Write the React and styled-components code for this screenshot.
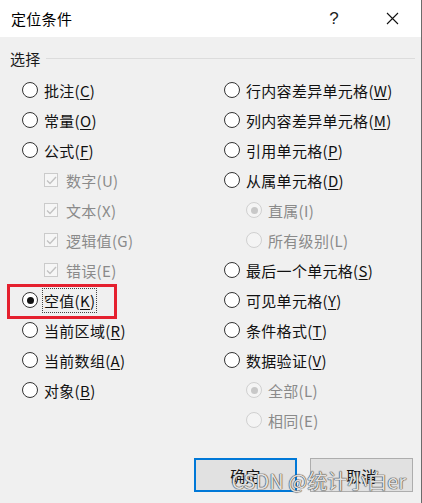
import React from 'react'
import styled, { createGlobalStyle, css } from 'styled-components'

const GlobalStyle = createGlobalStyle`
  html, body {
    margin: 0;
    padding: 0;
    background: #f0f0f0;
  }
  body {
    font-family: "Noto Sans CJK SC", "Noto Sans", sans-serif;
  }
`

const Window = styled.div`
  width: 422px;
  height: 503px;
  display: flex;
  flex-direction: column;
  box-sizing: border-box;
  border-right: 1px solid #6b6b6b;
  background: #f0f0f0;
  position: relative;
  overflow: hidden;
`

const TitleBar = styled.div`
  height: 37px;
  flex: none;
  background: #fff;
  display: flex;
  align-items: center;
  padding-left: 11px;
`

const Title = styled.div`
  flex: 1;
  font-size: 15px;
  color: #000;
  letter-spacing: 0.3px;
`

const TitleButton = styled.div`
  width: 58px;
  height: 37px;
  display: flex;
  align-items: center;
  justify-content: center;
  font-size: 17px;
  color: #222;
  font-family: "Liberation Sans", sans-serif;
`

const Body = styled.div`
  flex: 1;
  display: flex;
  flex-direction: column;
  padding: 10px 8px 0 10px;
`

const GroupHead = styled.div`
  display: flex;
  align-items: center;
  gap: 5px;
  height: 22px;
  font-size: 15px;
  letter-spacing: 0.3px;
  color: #1a1a1a;
  &::after {
    content: '';
    flex: 1;
    height: 1px;
    background: #dcdcdc;
    margin-right: -2px;
  }
`

const Columns = styled.div`
  display: grid;
  grid-template-columns: 202px 1fr;
  padding-left: 12px;
  margin-top: 6px;
`

const Column = styled.div`
  display: flex;
  flex-direction: column;
`

const Row = styled.div`
  position: relative;
  height: 30px;
  display: flex;
  align-items: center;
  padding-left: ${p => (p.$sub ? 22 : 0)}px;
  font-size: 15px;
  letter-spacing: 0.3px;
  color: ${p => (p.$disabled ? '#8a8a8a' : '#111')};
  white-space: nowrap;
`

const RadioDot = styled.span`
  position: relative;
  width: 16px;
  height: 16px;
  box-sizing: border-box;
  border-radius: 50%;
  flex: none;
  margin-right: 6px;
  background: ${p => (p.$disabled ? '#f4f4f4' : '#fff')};
  border: 1.5px solid ${p => (p.$disabled ? '#d0d0d0' : '#333')};
  ${p =>
    p.$checked &&
    css`
      &::after {
        content: '';
        position: absolute;
        left: 50%;
        top: 50%;
        width: 7px;
        height: 7px;
        margin: -3.5px 0 0 -3.5px;
        border-radius: 50%;
        background: ${p.$disabled ? '#c8c8c8' : '#111'};
      }
    `}
`

const CheckBox = styled.span`
  width: 14px;
  height: 14px;
  box-sizing: border-box;
  flex: none;
  margin-right: 8px;
  border: 1px solid #cbcbcb;
  background: #f6f6f6;
  display: flex;
  align-items: center;
  justify-content: center;
`

const Label = styled.span`
  display: inline-block;
  padding: 1px 1px;
  border: 1px ${p => (p.$focus ? 'dotted #444' : 'solid transparent')};
  margin-left: -2px;
`

const Key = styled.span`
  text-decoration: ${p => (p.$disabled ? 'none' : 'underline')};
  text-underline-offset: 2px;
  text-decoration-thickness: 1px;
`

const Highlight = styled.div`
  position: absolute;
  left: -15px;
  top: -1px;
  width: 110px;
  height: 35px;
  box-sizing: border-box;
  border: 3px solid #e5202e;
  pointer-events: none;
`

const Footer = styled.div`
  display: flex;
  justify-content: flex-end;
  gap: 13px;
  margin-top: 23px;
`

const Button = styled.div`
  width: 103px;
  height: 34px;
  box-sizing: border-box;
  display: flex;
  align-items: center;
  justify-content: center;
  background: #e1e1e1;
  font-size: 15px;
  letter-spacing: 0.3px;
  color: #111;
  border: ${p => (p.$primary ? '2px solid #0078d7' : '1px solid #adadad')};
`

const Watermark = styled.div`
  position: absolute;
  right: 15px;
  bottom: 8px;
  font-size: 20px;
  color: rgba(255, 255, 255, 0.85);
  text-shadow: 0 0 1px #444, 0 0 1px #444, 0 0 1px #444;
  font-family: "Noto Sans CJK SC", "Noto Sans", sans-serif;
  pointer-events: none;
`

const Check = () => (
  <svg width="11" height="9" viewBox="0 0 11 9">
    <path d="M1 4.5 L4 7.5 L10 1" fill="none" stroke="#c2c2c2" strokeWidth="1.4" />
  </svg>
)

const Close = () => (
  <svg width="13" height="13" viewBox="0 0 13 13">
    <path d="M1 1 L12 12 M12 1 L1 12" stroke="#111" strokeWidth="1.1" />
  </svg>
)

const left = [
  { type: 'radio', text: '批注', key: 'C' },
  { type: 'radio', text: '常量', key: 'O' },
  { type: 'radio', text: '公式', key: 'F' },
  { type: 'check', text: '数字', key: 'U', sub: true, disabled: true },
  { type: 'check', text: '文本', key: 'X', sub: true, disabled: true },
  { type: 'check', text: '逻辑值', key: 'G', sub: true, disabled: true },
  { type: 'check', text: '错误', key: 'E', sub: true, disabled: true },
  { type: 'radio', text: '空值', key: 'K', checked: true, focus: true, mark: true },
  { type: 'radio', text: '当前区域', key: 'R' },
  { type: 'radio', text: '当前数组', key: 'A' },
  { type: 'radio', text: '对象', key: 'B' },
]

const right = [
  { type: 'radio', text: '行内容差异单元格', key: 'W' },
  { type: 'radio', text: '列内容差异单元格', key: 'M' },
  { type: 'radio', text: '引用单元格', key: 'P' },
  { type: 'radio', text: '从属单元格', key: 'D' },
  { type: 'radio', text: '直属', key: 'I', sub: true, disabled: true, checked: true },
  { type: 'radio', text: '所有级别', key: 'L', sub: true, disabled: true },
  { type: 'radio', text: '最后一个单元格', key: 'S' },
  { type: 'radio', text: '可见单元格', key: 'Y' },
  { type: 'radio', text: '条件格式', key: 'T' },
  { type: 'radio', text: '数据验证', key: 'V' },
  { type: 'radio', text: '全部', key: 'L', sub: true, disabled: true, checked: true },
  { type: 'radio', text: '相同', key: 'E', sub: true, disabled: true },
]

const Option = ({ item }) => (
  <Row $sub={item.sub} $disabled={item.disabled}>
    {item.type === 'radio' ? (
      <RadioDot $checked={item.checked} $disabled={item.disabled} />
    ) : (
      <CheckBox>
        <Check />
      </CheckBox>
    )}
    <Label $focus={item.focus}>
      {item.text}(<Key $disabled={item.disabled}>{item.key}</Key>)
    </Label>
    {item.mark && <Highlight />}
  </Row>
)

export default function App() {
  return (
    <>
      <GlobalStyle />
      <Window>
        <TitleBar>
          <Title>定位条件</Title>
          <TitleButton>?</TitleButton>
          <TitleButton>
            <Close />
          </TitleButton>
        </TitleBar>
        <Body>
          <GroupHead>选择</GroupHead>
          <Columns>
            <Column>
              {left.map((item, i) => (
                <Option key={i} item={item} />
              ))}
            </Column>
            <Column>
              {right.map((item, i) => (
                <Option key={i} item={item} />
              ))}
            </Column>
          </Columns>
          <Footer>
            <Button $primary>确定</Button>
            <Button>取消</Button>
          </Footer>
        </Body>
        <Watermark>CSDN @统计小白er</Watermark>
      </Window>
    </>
  )
}
